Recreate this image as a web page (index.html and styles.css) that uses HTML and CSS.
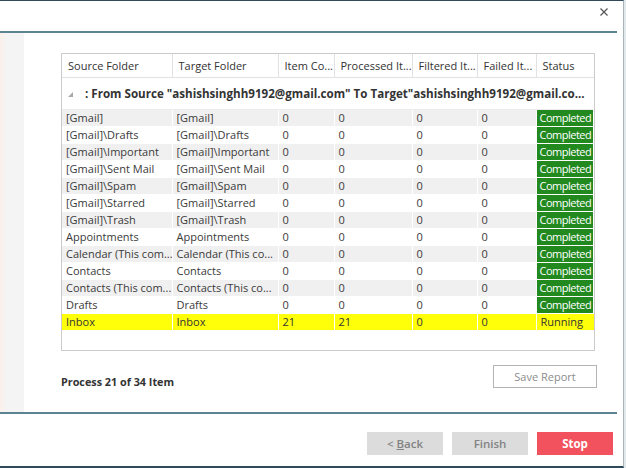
FILE: index.html
```html
<!DOCTYPE html>
<html>
<head>
    <title>Migration Progress</title>
    <link rel="stylesheet" href="styles.css">
</head>
<body>
    <div class="dialog">
        <!-- Title bar with close button -->
        <div class="titlebar">
            <span class="close">
                <svg width="8" height="8" viewBox="0 0 8 8"><path d="M0.5 0.5 L7.5 7.5 M7.5 0.5 L0.5 7.5" stroke="#555" stroke-width="1.2"/></svg>
            </span>
        </div>
        <div class="rule"></div>

        <div class="content">
            <div class="side"></div>
            <div class="main">
                <div class="grid">
                    <table>
                        <colgroup>
                            <col style="width:110px">
                            <col style="width:106px">
                            <col style="width:56px">
                            <col style="width:78px">
                            <col style="width:65px">
                            <col style="width:59px">
                            <col style="width:58px">
                        </colgroup>
                        <thead>
                            <tr>
                                <th>Source Folder</th>
                                <th>Target Folder</th>
                                <th>Item Co...</th>
                                <th>Processed It...</th>
                                <th>Filtered It...</th>
                                <th>Failed It...</th>
                                <th>Status</th>
                            </tr>
                        </thead>
                        <tbody>
                            <tr class="group">
                                <td colspan="7"><span class="caret"><svg width="5" height="5" viewBox="0 0 5 5"><path d="M5 0 L5 5 L0 5 Z" fill="#a8a8a8"/></svg></span>: From Source "ashishsinghh9192@gmail.com" To Target"ashishsinghh9192@gmail.co...</td>
                            </tr>
                            <tr class="alt"><td>[Gmail]</td><td>[Gmail]</td><td>0</td><td>0</td><td>0</td><td>0</td><td class="done">Completed</td></tr>
                            <tr><td>[Gmail]\Drafts</td><td>[Gmail]\Drafts</td><td>0</td><td>0</td><td>0</td><td>0</td><td class="done">Completed</td></tr>
                            <tr class="alt"><td>[Gmail]\Important</td><td>[Gmail]\Important</td><td>0</td><td>0</td><td>0</td><td>0</td><td class="done">Completed</td></tr>
                            <tr><td>[Gmail]\Sent Mail</td><td>[Gmail]\Sent Mail</td><td>0</td><td>0</td><td>0</td><td>0</td><td class="done">Completed</td></tr>
                            <tr class="alt"><td>[Gmail]\Spam</td><td>[Gmail]\Spam</td><td>0</td><td>0</td><td>0</td><td>0</td><td class="done">Completed</td></tr>
                            <tr><td>[Gmail]\Starred</td><td>[Gmail]\Starred</td><td>0</td><td>0</td><td>0</td><td>0</td><td class="done">Completed</td></tr>
                            <tr class="alt"><td>[Gmail]\Trash</td><td>[Gmail]\Trash</td><td>0</td><td>0</td><td>0</td><td>0</td><td class="done">Completed</td></tr>
                            <tr><td>Appointments</td><td>Appointments</td><td>0</td><td>0</td><td>0</td><td>0</td><td class="done">Completed</td></tr>
                            <tr class="alt"><td>Calendar (This com...</td><td>Calendar (This co...</td><td>0</td><td>0</td><td>0</td><td>0</td><td class="done">Completed</td></tr>
                            <tr><td>Contacts</td><td>Contacts</td><td>0</td><td>0</td><td>0</td><td>0</td><td class="done">Completed</td></tr>
                            <tr class="alt"><td>Contacts (This com...</td><td>Contacts (This co...</td><td>0</td><td>0</td><td>0</td><td>0</td><td class="done">Completed</td></tr>
                            <tr><td>Drafts</td><td>Drafts</td><td>0</td><td>0</td><td>0</td><td>0</td><td class="done">Completed</td></tr>
                            <tr class="running"><td>Inbox</td><td>Inbox</td><td>21</td><td>21</td><td>0</td><td>0</td><td>Running</td></tr>
                        </tbody>
                    </table>
                </div>

                <div class="summary">
                    <span class="count">Process 21 of 34 Item</span>
                    <button class="save">Save Report</button>
                </div>
            </div>
        </div>

        <div class="rule"></div>

        <!-- Wizard buttons -->
        <div class="actions">
            <button class="btn">&lt; <u>B</u>ack</button>
            <button class="btn">Finish</button>
            <button class="btn stop">Stop</button>
        </div>
    </div>
</body>
</html>
```

FILE: styles.css
```css
/* Reset */
* {
    margin: 0;
    padding: 0;
    box-sizing: border-box;
}

body {
    background-color: #e2e9ed;
    font-family: "Open Sans", "Noto Sans", sans-serif;
    font-size: 11px;
    color: #3a3a3a;
}

/* Dialog frame */
.dialog {
    width: 624px;
    height: 468px;
    background-color: #fff;
    border-top: 1px solid #2f4a58;
    border-right: 1px solid #a9b3b9;
    border-bottom: 2px solid #2f4a58;
    display: flex;
    flex-direction: column;
}

.titlebar {
    height: 30px;
    display: flex;
    justify-content: flex-end;
    align-items: flex-start;
    padding: 7px 15px 0 0;
}

.close {
    display: block;
    line-height: 0;
}

.rule {
    height: 2px;
    margin-right: 6px;
    background-color: #5c8393;
}

/* Middle area */
.content {
    height: 379px;
    display: flex;
}

.side {
    width: 24px;
    background: linear-gradient(to right, #fbf0ea, #f4f4f4 7px);
}

.main {
    flex: 1;
    padding: 20px 0 0 37px;
}

/* Data grid */
.grid {
    width: 534px;
    height: 298px;
    border: 1px solid #cbcbcb;
    overflow: hidden;
}

.grid table {
    width: 532px;
    table-layout: fixed;
    border-collapse: collapse;
}

.grid th {
    height: 23px;
    font-weight: normal;
    text-align: left;
    padding-left: 6px;
    color: #333;
    border-right: 1px solid #e2e2e2;
    border-bottom: 1px solid #e2e2e2;
    white-space: nowrap;
    overflow: hidden;
}

.grid th:last-child {
    border-right: none;
}

.grid td {
    height: 17px;
    padding: 0 0 0 4px;
    white-space: nowrap;
    overflow: hidden;
    border-right: 1px solid #fff;
    border-bottom: 1px solid #fff;
}

.grid tr.alt td {
    background-color: #f0f0f0;
}

.grid tr.group td {
    height: 32px;
    padding-left: 6px;
    font-weight: bold;
    font-size: 11.6px;
    color: #333;
    background-color: #fff;
    border-bottom: 1px solid #ececec;
}

.caret {
    display: inline-block;
    width: 17px;
    line-height: 0;
    vertical-align: middle;
}

.grid td.done {
    background-color: #22891f;
    color: #fff;
    border-left: 1px solid #fff;
    border-right: 2px solid #fff;
    padding-left: 3px;
    letter-spacing: -0.5px;
}

.grid tr.alt td.done {
    background-color: #22891f;
}

.grid tr.running td {
    background-color: #ffff0a;
    color: #333;
}

/* Summary line under the grid */
.summary {
    width: 536px;
    margin-top: 14px;
    display: flex;
    justify-content: space-between;
    align-items: flex-start;
}

.count {
    margin-top: 9px;
    font-weight: bold;
    font-size: 10.8px;
    color: #333;
}

.save {
    width: 104px;
    height: 23px;
    background-color: #fff;
    border: 1px solid #b4b4b4;
    color: #8c8c8c;
    font-family: inherit;
    font-size: 11px;
}

/* Bottom buttons */
.actions {
    flex: 1;
    display: flex;
    justify-content: flex-end;
    align-items: flex-start;
    gap: 9px;
    padding: 18px 10px 0 0;
}

.btn {
    width: 76px;
    height: 23px;
    border: none;
    background-color: #dcdcdc;
    color: #838383;
    font-family: inherit;
    font-size: 11.5px;
    font-weight: 600;
}

.btn.stop {
    background-color: #f2525d;
    color: #fff;
    font-weight: bold;
}
```
